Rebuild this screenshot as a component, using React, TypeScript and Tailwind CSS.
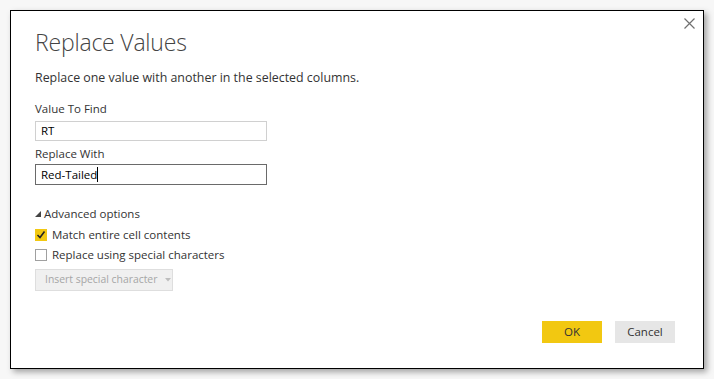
export default function App() {
  return (
    <div className="w-[714px] h-[379px] bg-[#f7f7f7] p-[10px] font-['Open_Sans',sans-serif] text-[#333]">
      <div className="relative w-[694px] h-[359px] bg-white border border-black shadow-[3px_3px_6px_rgba(0,0,0,0.35)] flex flex-col pl-[24px]">
        <button className="absolute right-[8px] top-[6px] w-[12px] h-[12px] flex items-center justify-center">
          <svg width="11" height="11" viewBox="0 0 11 11" stroke="#707070" strokeWidth="1.2">
            <path d="M0.5 0.5 L10.5 10.5 M10.5 0.5 L0.5 10.5" />
          </svg>
        </button>

        <h1 className="mt-[15px] text-[23px] leading-[32px] font-light text-[#444] tracking-[-0.2px]">Replace Values</h1>
        <p className="mt-[12px] text-[12.4px] leading-[16px]">Replace one value with another in the selected columns.</p>

        <label className="mt-[15px] text-[11.5px] leading-[16px]">Value To Find</label>
        <div className="mt-[4px] w-[232px] h-[20px] border border-[#d0d0d0] px-[5px] text-[11.5px] leading-[18px] text-black">RT</div>

        <label className="mt-[5px] text-[11.5px] leading-[16px]">Replace With</label>
        <div className="mt-[2px] w-[232px] h-[21px] border border-[#6a6a6a] px-[5px] text-[11.5px] leading-[19px] text-black flex items-center">
          Red-Tailed<span className="inline-block w-px h-[15px] bg-black" />
        </div>

        <div className="mt-[21px] flex items-center gap-[3px] text-[11.5px] leading-[16px]">
          <svg width="6" height="6" viewBox="0 0 6 6"><polygon points="6,0 6,6 0,6" fill="#444" /></svg>
          <span>Advanced options</span>
        </div>

        <div className="mt-[3px] h-[20px] flex items-center gap-[5px] text-[11.5px]">
          <span className="w-[12px] h-[12px] bg-[#f2c811] flex items-center justify-center">
            <svg width="10" height="10" viewBox="0 0 10 10" fill="none" stroke="#222" strokeWidth="1.6">
              <path d="M1.5 5 L4 7.5 L8.5 1.5" />
            </svg>
          </span>
          <span>Match entire cell contents</span>
        </div>
        <div className="h-[20px] flex items-center gap-[5px] text-[11.5px]">
          <span className="w-[12px] h-[12px] border border-[#a0a0a0] bg-white" />
          <span>Replace using special characters</span>
        </div>

        <div className="mt-[4px] w-[138px] h-[22px] bg-[#f0f0f0] border border-[#dedede] flex items-center pl-[9px] gap-[8px] text-[10.4px] whitespace-nowrap text-[#a6a6a6]">
          <span>Insert special character</span>
          <svg width="6" height="4" viewBox="0 0 6 4"><polygon points="0,0 6,0 3,3.5" fill="#bdbdbd" /></svg>
        </div>

        <div className="mt-auto mb-[25px] mr-[28px] flex justify-end gap-[13px] text-[11.5px]">
          <button className="w-[60px] h-[22px] bg-[#f2c811] text-[#333]">OK</button>
          <button className="w-[60px] h-[22px] bg-[#e6e6e6] text-[#333]">Cancel</button>
        </div>
      </div>
    </div>
  );
}
